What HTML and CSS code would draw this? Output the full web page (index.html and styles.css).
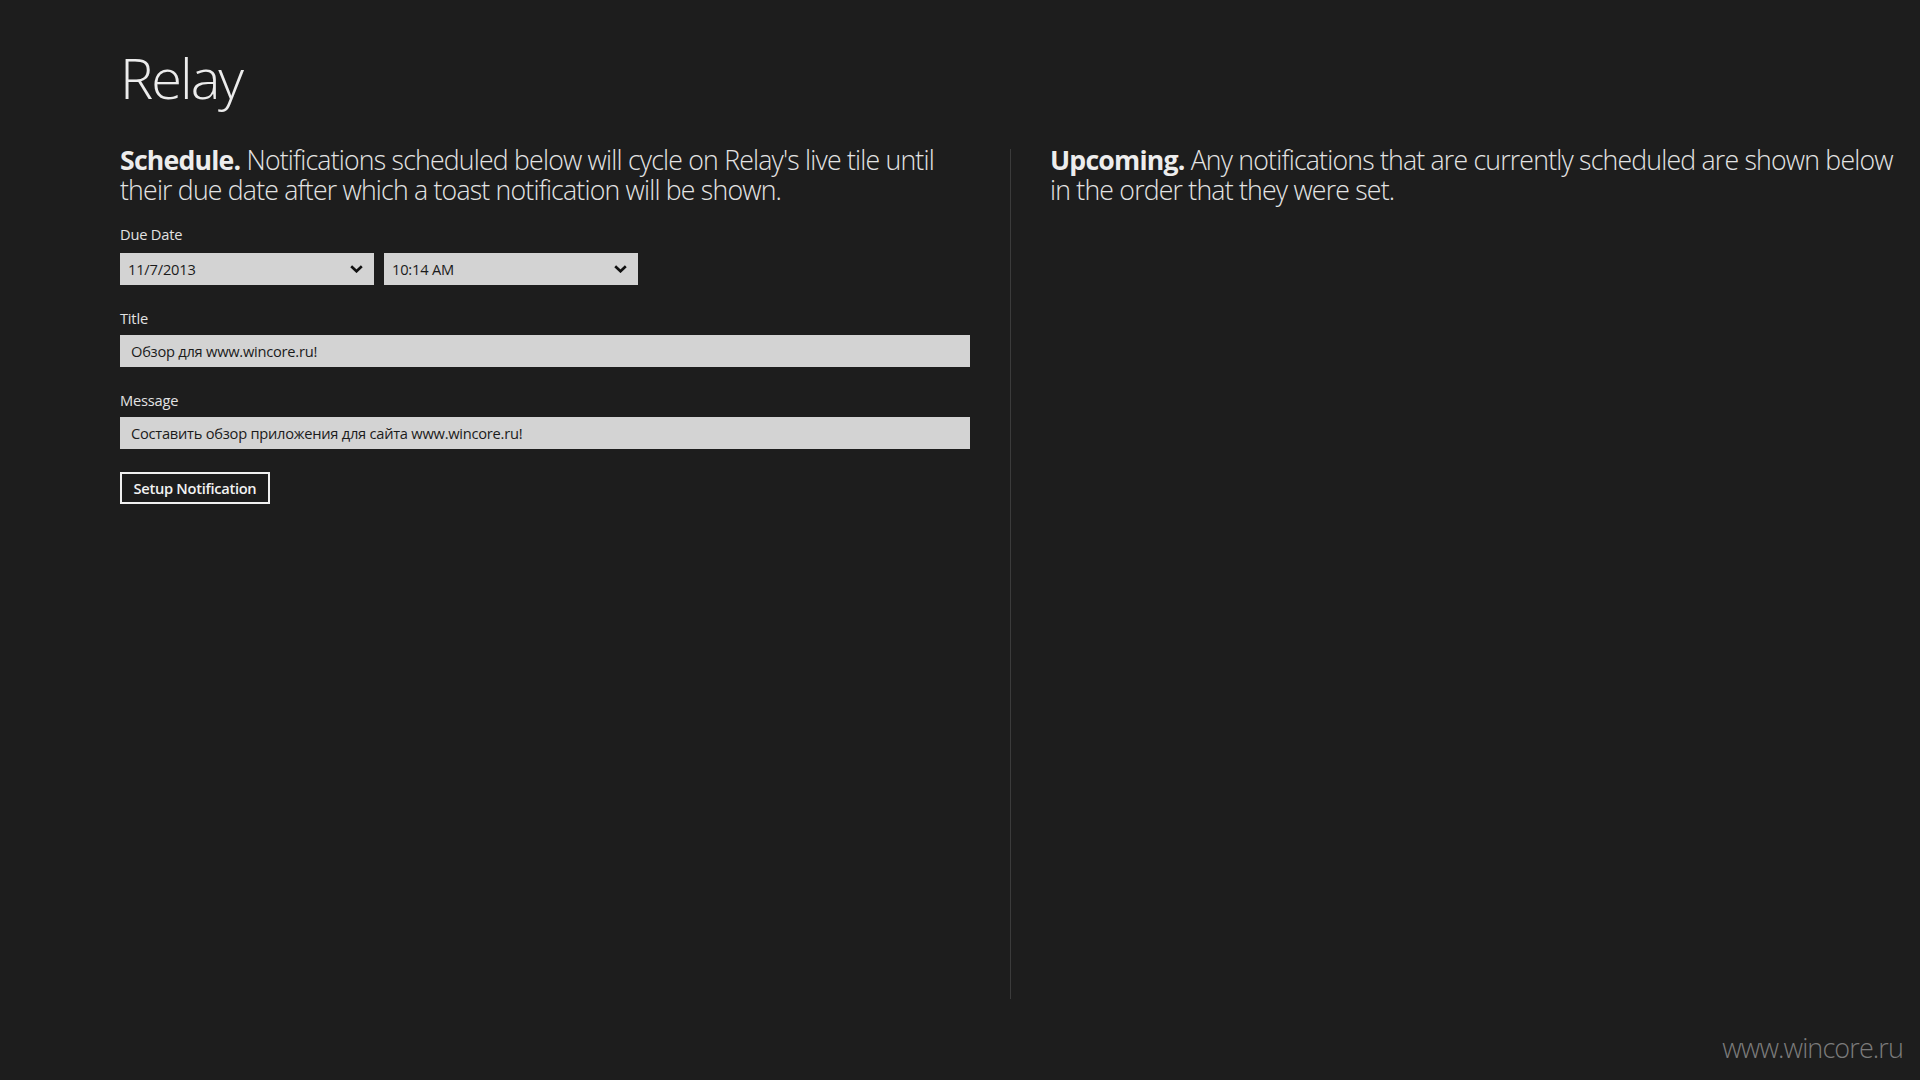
FILE: index.html
```html
<!DOCTYPE html>
<html lang="en">
<head>
<meta charset="utf-8">
<title>Relay</title>
<link rel="stylesheet" href="styles.css">
</head>
<body>
<div class="page">
  <h1 class="app-title">Relay</h1>
  <div class="columns">
    <section class="col">
      <p class="intro"><span class="line"><b>Schedule.</b> Notifications scheduled below will cycle on Relay's live tile until</span><span class="line">their due date after which a toast notification will be shown.</span></p>
      <div class="field field-date">
        <div class="label">Due Date</div>
        <div class="combo-row">
          <div class="combo"><span>11/7/2013</span><svg class="chev" width="13" height="8" viewBox="0 0 13 8"><polyline points="1.2,1.2 6.5,6.3 11.8,1.2" fill="none" stroke="#111" stroke-width="2.6"/></svg></div>
          <div class="combo"><span>10:14 AM</span><svg class="chev" width="13" height="8" viewBox="0 0 13 8"><polyline points="1.2,1.2 6.5,6.3 11.8,1.2" fill="none" stroke="#111" stroke-width="2.6"/></svg></div>
        </div>
      </div>
      <div class="field">
        <div class="label">Title</div>
        <div class="textbox">Обзор для www.wincore.ru!</div>
      </div>
      <div class="field">
        <div class="label">Message</div>
        <div class="textbox">Составить обзор приложения для сайта www.wincore.ru!</div>
      </div>
      <button class="btn">Setup Notification</button>
    </section>
    <div class="divider"></div>
    <section class="col">
      <p class="intro"><span class="line"><b>Upcoming.</b> Any notifications that are currently scheduled are shown below</span><span class="line">in the order that they were set.</span></p>
    </section>
  </div>
  <div class="watermark">www.wincore.ru</div>
</div>
</body>
</html>
```

FILE: styles.css
```css
html, body {
  margin: 0;
  padding: 0;
  background: #1d1d1d;
}
body {
  width: 1920px;
  height: 1080px;
  overflow: hidden;
  font-family: "Open Sans", "Noto Sans", "Liberation Sans", sans-serif;
  color: #e6e6e6;
}
.page {
  position: relative;
  height: 1080px;
  padding-left: 120px;
  box-sizing: border-box;
}
.app-title {
  margin: 0;
  padding-top: 44px;
  font-size: 56px;
  font-weight: 300;
  line-height: 66px;
  color: #ececec;
  letter-spacing: -2px;
}
.columns {
  display: flex;
  margin-top: 39px;
}
.col {
  width: 850px;
  flex: none;
}
.divider {
  width: 1px;
  background: #3b3b3b;
  margin: 0 39px 0 40px;
  height: 850px;
}
.intro {
  margin: -4px 0 0 0;
  font-size: 26.67px;
  font-weight: 300;
  white-space: nowrap;
  color: #e4e4e4;
  letter-spacing: -0.8px;
}
.intro .line {
  display: block;
  height: 30px;
  line-height: 30px;
}
.intro b {
  font-weight: 700;
  color: #ededed;
}
.field {
  margin-top: 23px;
}
.field-date {
  margin-top: 19px;
}
.label {
  font-size: 14.67px;
  line-height: 20px;
  color: #e2e2e2;
  margin-bottom: 7px;
  letter-spacing: -0.2px;
}
.field-date .label {
  margin-bottom: 9px;
}
.combo-row {
  display: flex;
  gap: 10px;
}
.combo {
  width: 254px;
  height: 32px;
  background: #d3d3d3;
  display: flex;
  align-items: center;
  justify-content: space-between;
  box-sizing: border-box;
  padding: 0 11px 0 8px;
  font-size: 14.67px;
  color: #1b1b1b;
  letter-spacing: -0.2px;
}
.chev {
  display: block;
}
.textbox {
  width: 850px;
  height: 32px;
  background: #d3d3d3;
  box-sizing: border-box;
  padding: 0 11px;
  font-size: 14.67px;
  line-height: 32px;
  color: #1b1b1b;
  letter-spacing: -0.25px;
}
.btn {
  display: block;
  margin-top: 23px;
  width: 150px;
  height: 32px;
  background: transparent;
  border: 2px solid #f0f0f0;
  color: #f2f2f2;
  font-family: "Open Sans", "Noto Sans", sans-serif;
  font-size: 14.67px;
  font-weight: 600;
  padding: 0;
  letter-spacing: -0.3px;
}
.watermark {
  position: absolute;
  right: 17px;
  bottom: 14px;
  font-size: 27px;
  font-weight: 300;
  color: #7b7b7b;
  letter-spacing: -0.9px;
}
```
